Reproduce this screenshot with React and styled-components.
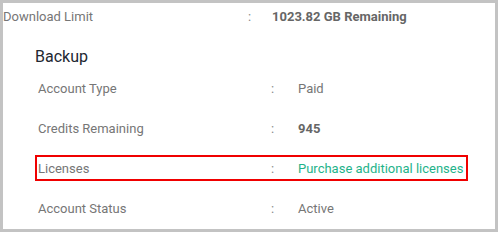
import React from "react";
import styled, { createGlobalStyle } from "styled-components";

const Global = createGlobalStyle`
  html, body { margin: 0; padding: 0; background: #ffffff; }
  body { font-family: Roboto, "Noto Sans", Arial, sans-serif; }
`;

const Frame = styled.div`
  box-sizing: border-box;
  width: 498px;
  height: 232px;
  border: 3px solid #c3c3c3;
  background: #ffffff;
  overflow: hidden;
`;

const TopRow = styled.div`
  display: grid;
  grid-template-columns: 245px 24px 1fr;
  align-items: center;
  height: 26px;
  font-size: 13px;
  color: #767676;
`;

const Section = styled.div`
  margin-left: 32px;
  margin-right: 27px;
`;

const Heading = styled.h3`
  margin: 0;
  padding-top: 18px;
  height: 28px;
  font-size: 16px;
  font-weight: 400;
  color: #222831;
  line-height: 20px;
`;

const Row = styled.div`
  display: grid;
  grid-template-columns: 233px 27px 1fr;
  align-items: center;
  box-sizing: border-box;
  height: 26px;
  margin-bottom: 14px;
  border: 2px solid ${(p) => (p.$highlight ? "#f00000" : "transparent")};
  padding-left: 1px;
  font-size: 13px;
  color: #767676;
`;

const Colon = styled.span`
  color: #8a8a8a;
`;

const Value = styled.span`
  color: ${(p) => (p.$link ? "#1fb38a" : p.$bold ? "#666666" : "#767676")};
  font-weight: ${(p) => (p.$bold ? 700 : 400)};
  white-space: nowrap;
`;

const rows = [
  { label: "Account Type", value: "Paid" },
  { label: "Credits Remaining", value: "945", bold: true },
  { label: "Licenses", value: "Purchase additional licenses", link: true, highlight: true },
  { label: "Account Status", value: "Active" },
];

export default function App() {
  return (
    <>
      <Global />
      <Frame>
        <TopRow>
          <span>Download Limit</span>
          <Colon>:</Colon>
          <Value $bold>1023.82 GB Remaining</Value>
        </TopRow>
        <Section>
          <Heading>Backup</Heading>
          {rows.map((r) => (
            <Row key={r.label} $highlight={r.highlight}>
              <span>{r.label}</span>
              <Colon>:</Colon>
              <Value $bold={r.bold} $link={r.link}>{r.value}</Value>
            </Row>
          ))}
        </Section>
      </Frame>
    </>
  );
}
